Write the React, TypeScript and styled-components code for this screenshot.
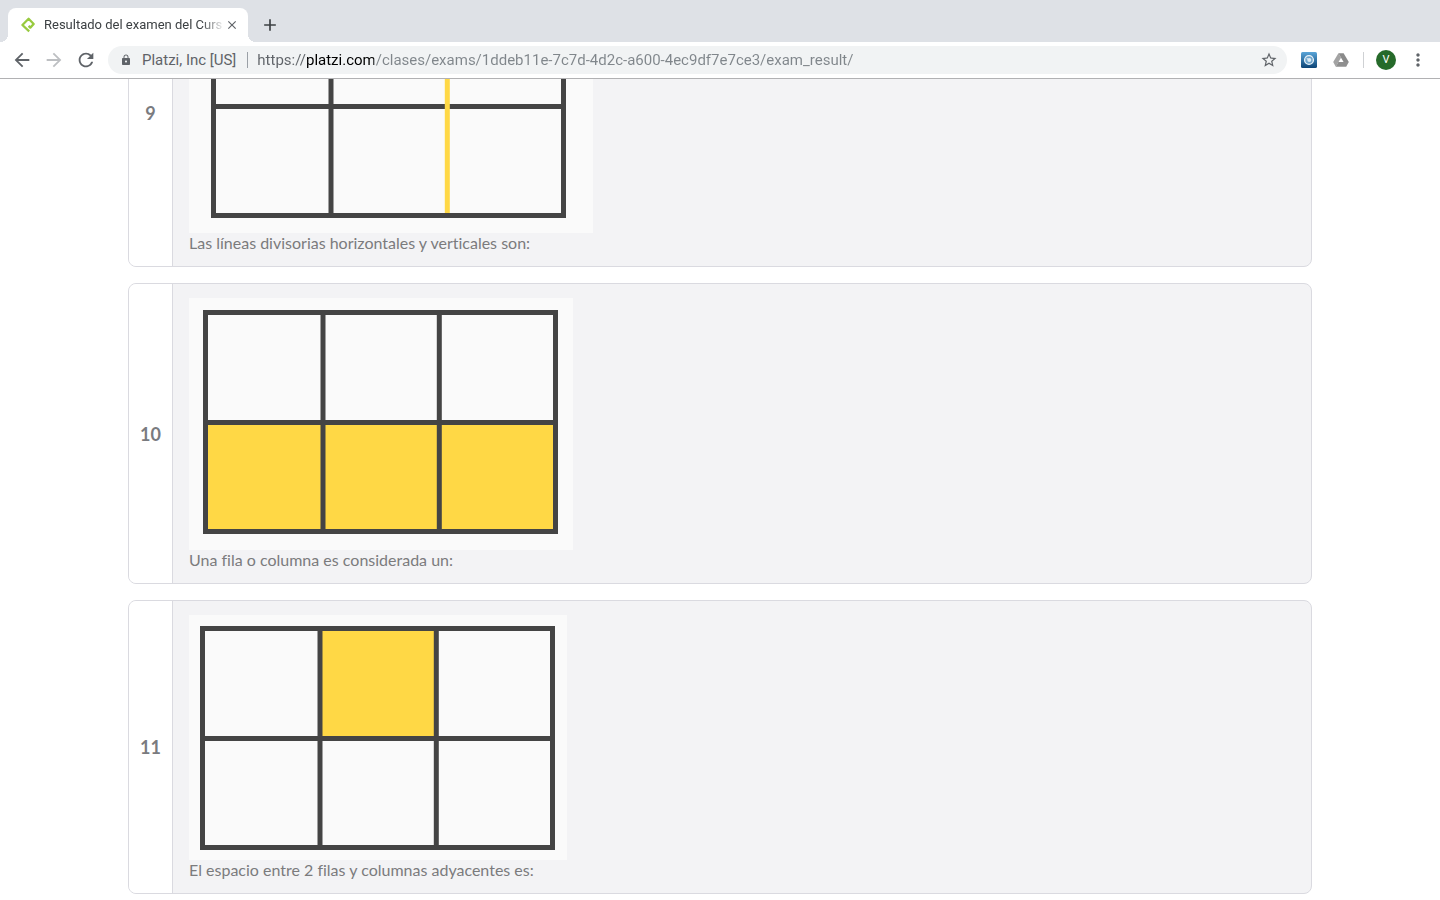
import React from "react";
import styled, { createGlobalStyle } from "styled-components";
import {
  MdAdd,
  MdArrowBack,
  MdArrowForward,
  MdClose,
  MdLock,
  MdMoreVert,
  MdRefresh,
  MdStarBorder,
} from "react-icons/md";

const GlobalStyle = createGlobalStyle`
  *, *::before, *::after { box-sizing: border-box; }
  body { margin: 0; background: #fff; }
  button { padding: 0; border: 0; background: none; font: inherit; color: inherit; cursor: pointer; }
`;

const Browser = styled.div`
  display: flex;
  flex-direction: column;
  height: 100vh;
  font-family: Roboto, "Liberation Sans", sans-serif;
  color: #5f6368;
`;

const TabStrip = styled.div`
  display: flex;
  flex: none;
  align-items: flex-end;
  height: 42px;
  padding-left: 8px;
  background: #dee1e6;
`;

const Tab = styled.div`
  position: relative;
  display: flex;
  align-items: center;
  width: 240px;
  height: 34px;
  padding: 0 9px 0 12px;
  border-radius: 8px 8px 0 0;
  background: #fff;

  &::before,
  &::after {
    content: "";
    position: absolute;
    bottom: 0;
    width: 8px;
    height: 8px;
  }
  &::before {
    right: 100%;
    background: radial-gradient(circle at 0 0, transparent 8px, #fff 8px);
  }
  &::after {
    left: 100%;
    background: radial-gradient(circle at 100% 0, transparent 8px, #fff 8px);
  }
`;

const TabTitle = styled.span`
  flex: 1;
  min-width: 0;
  margin: 0 0 0 8px;
  white-space: nowrap;
  font-size: 13px;
  line-height: 16px;
  color: #3c4043;
  mask-image: linear-gradient(to right, #000 calc(100% - 24px), transparent);
`;

const IconButton = styled.button<{ $size?: number; $color?: string }>`
  display: flex;
  flex: none;
  align-items: center;
  justify-content: center;
  width: ${(p) => p.$size ?? 28}px;
  height: ${(p) => p.$size ?? 28}px;
  color: ${(p) => p.$color ?? "#5f6368"};
`;

const NewTab = styled(IconButton)`
  margin: 0 0 3px 8px;
`;

const Toolbar = styled.div`
  display: flex;
  flex: none;
  align-items: center;
  gap: 4px;
  height: 37px;
  padding: 0 8px;
  border-bottom: 1px solid #b1b1b3;
  background: #fff;
`;

const Omnibox = styled.div`
  display: flex;
  flex: 1;
  align-items: center;
  height: 28px;
  margin-left: 4px;
  padding: 0 4px 0 12px;
  border-radius: 14px;
  background: #f1f3f4;
  font-size: 15px;
  line-height: 20px;
`;

const SiteInfo = styled.button`
  display: flex;
  align-items: center;
  gap: 10px;
  white-space: nowrap;
`;

const Rule = styled.span`
  flex: none;
  width: 1px;
  height: 16px;
  margin: 0 9px 0 11px;
  background: #9aa0a6;
`;

const Address = styled.input`
  flex: 1;
  min-width: 0;
  height: 20px;
  padding: 0;
  border: 0;
  outline: 0;
  font: inherit;
  background: linear-gradient(to right, #5f6368 49px, #000 49px, #000 117px, #80868b 117px);
  background-clip: text;
  -webkit-text-fill-color: transparent;
`;

const Extensions = styled.div`
  display: flex;
  align-items: center;
  gap: 4px;
  margin-left: 4px;
`;

const ExtensionRule = styled.span`
  width: 1px;
  height: 16px;
  margin: 0 4px;
  background: #cfd1d4;
`;

const Avatar = styled.span`
  width: 20px;
  height: 20px;
  border-radius: 50%;
  background: #266a2a;
  color: #fff;
  font-size: 11px;
  line-height: 20px;
  text-align: center;
`;

const Page = styled.main`
  flex: 1;
  min-height: 0;
  overflow: hidden;
  padding: 0 128px;
  font-family: Lato, "Liberation Sans", sans-serif;
`;

/* The list is scrolled so that its first question is partly under the toolbar. */
const Questions = styled.ol`
  display: flex;
  flex-direction: column;
  gap: 16px;
  margin: -120px 0 0;
  padding: 0;
  list-style: none;
`;

const Card = styled.li`
  display: flex;
  overflow: hidden;
  border: 1px solid #dadae0;
  border-radius: 8px;
  background: #f3f3f5;
`;

const Index = styled.div`
  display: flex;
  flex: none;
  align-items: center;
  justify-content: center;
  width: 44px;
  border-right: 1px solid #dadae0;
  background: #fff;
  color: #7a7b7f;
  font-size: 18px;
  font-weight: 700;
`;

const Statement = styled.div`
  padding: 14px 16px 13px;
  color: #7b7b7d;
  font-size: 16px;
  font-variant-ligatures: none;
  line-height: 20px;

  svg {
    display: block;
  }
  p {
    margin: 0;
  }
`;

type Cell = [number, number];

interface Diagram {
  width: number;
  height: number;
  x: number;
  y: number;
  filled?: Cell[];
  highlightedLine?: boolean;
}

const INK = "#444";
const YELLOW = "#ffd845";
const COLUMNS = [2.5, 120, 236.3, 352.5];
const ROWS = [2.5, 112.5, 221.5];

/* A grid of three columns by two rows; cells or the last divider can be yellow. */
function GridDiagram({ width, height, x, y, filled = [], highlightedLine }: Diagram) {
  return (
    <svg width={width} height={height} role="img" aria-label="Cuadrícula">
      <rect width={width} height={height} fill="#fafafa" />
      <g transform={`translate(${x} ${y})`}>
        {filled.map(([column, row]) => (
          <rect
            key={`${column}-${row}`}
            x={COLUMNS[column]}
            y={ROWS[row]}
            width={COLUMNS[column + 1] - COLUMNS[column]}
            height={ROWS[row + 1] - ROWS[row]}
            fill={YELLOW}
          />
        ))}
        <path
          d={`M${COLUMNS[1]} 2V222${highlightedLine ? "" : `M${COLUMNS[2]} 2V222`}M2 112.5H353`}
          fill="none"
          stroke={INK}
          strokeWidth="5"
        />
        {highlightedLine && (
          <path d={`M${COLUMNS[2]} 2V222`} stroke={YELLOW} strokeWidth="5" />
        )}
        <rect x="2.5" y="2.5" width="350" height="219" fill="none" stroke={INK} strokeWidth="5" />
      </g>
    </svg>
  );
}

const QUESTIONS: { number: number; text: string; diagram: Diagram }[] = [
  {
    number: 9,
    text: "Las líneas divisorias horizontales y verticales son:",
    diagram: { width: 404, height: 259, x: 22, y: 20, highlightedLine: true },
  },
  {
    number: 10,
    text: "Una fila o columna es considerada un:",
    diagram: { width: 384, height: 252, x: 14, y: 12, filled: [[0, 1], [1, 1], [2, 1]] },
  },
  {
    number: 11,
    text: "El espacio entre 2 filas y columnas adyacentes es:",
    diagram: { width: 378, height: 245, x: 11, y: 11, filled: [[1, 0]] },
  },
];

function PlatziLogo() {
  return (
    <svg width="16" height="16" viewBox="0 0 16 16" fill="none" aria-hidden="true">
      <path
        d="M9.2 14.4L2.4 8L8.6 1.8L13.7 7L10.3 10.6L8.6 8.9"
        stroke="#98ca3f"
        strokeWidth="2.3"
        strokeLinejoin="round"
      />
    </svg>
  );
}

function BlueExtension() {
  return (
    <svg width="16" height="16" viewBox="0 0 16 16" aria-hidden="true">
      <defs>
        <linearGradient id="blue" x1="0" y1="0" x2="0" y2="1">
          <stop offset="0" stopColor="#5aa5d8" />
          <stop offset="1" stopColor="#0c4476" />
        </linearGradient>
      </defs>
      <rect width="16" height="16" rx="1.5" fill="url(#blue)" />
      <circle cx="8" cy="8" r="4.4" fill="#6ea5cc" stroke="#eaf3f9" strokeWidth="1.3" />
      <path d="M5.6 6.2L8 8" stroke="#eaf3f9" strokeWidth="1" />
      <circle cx="8.3" cy="8" r="2" fill="#dcebf5" />
    </svg>
  );
}

function DriveExtension() {
  return (
    <svg width="16" height="16" viewBox="0 0 16 16" aria-hidden="true">
      <path d="M5.4 1.2L0.2 10.1L2.8 14.7L8 5.7Z" fill="#a3a3a3" />
      <path d="M5.4 1.2H10.6L15.8 10.1H10.6Z" fill="#8a8a8a" />
      <path d="M5.4 10.1H15.8L13.2 14.7H2.8Z" fill="#8f8f8f" />
    </svg>
  );
}

export default function App() {
  return (
    <>
      <GlobalStyle />
      <Browser>
        <TabStrip>
          <Tab>
            <PlatziLogo />
            <TabTitle>Resultado del examen del Curs</TabTitle>
            <IconButton $size={14} aria-label="Cerrar pestaña">
              <MdClose size={14} stroke="currentColor" />
            </IconButton>
          </Tab>
          <NewTab aria-label="Nueva pestaña" $color="#3c4043">
            <MdAdd size={20} />
          </NewTab>
        </TabStrip>
        <Toolbar>
          <IconButton aria-label="Atrás">
            <MdArrowBack size={22} />
          </IconButton>
          <IconButton aria-label="Adelante" $color="#bdbfc2">
            <MdArrowForward size={22} />
          </IconButton>
          <IconButton aria-label="Recargar">
            <MdRefresh size={22} />
          </IconButton>
          <Omnibox>
            <SiteInfo>
              <MdLock size={12} />
              Platzi, Inc [US]
            </SiteInfo>
            <Rule />
            <Address
              aria-label="Dirección"
              defaultValue="https://platzi.com/clases/exams/1ddeb11e-7c7d-4d2c-a600-4ec9df7e7ce3/exam_result/"
            />
            <IconButton aria-label="Marcar página">
              <MdStarBorder size={18} />
            </IconButton>
          </Omnibox>
          <Extensions>
            <IconButton aria-label="Extensión">
              <BlueExtension />
            </IconButton>
            <IconButton aria-label="Google Drive">
              <DriveExtension />
            </IconButton>
            <ExtensionRule />
            <IconButton aria-label="Perfil">
              <Avatar>V</Avatar>
            </IconButton>
            <IconButton aria-label="Menú">
              <MdMoreVert size={20} />
            </IconButton>
          </Extensions>
        </Toolbar>
        <Page>
          <Questions>
            {QUESTIONS.map(({ number, text, diagram }) => (
              <Card key={number}>
                <Index>{number}</Index>
                <Statement>
                  <GridDiagram {...diagram} />
                  <p>{text}</p>
                </Statement>
              </Card>
            ))}
          </Questions>
        </Page>
      </Browser>
    </>
  );
}
